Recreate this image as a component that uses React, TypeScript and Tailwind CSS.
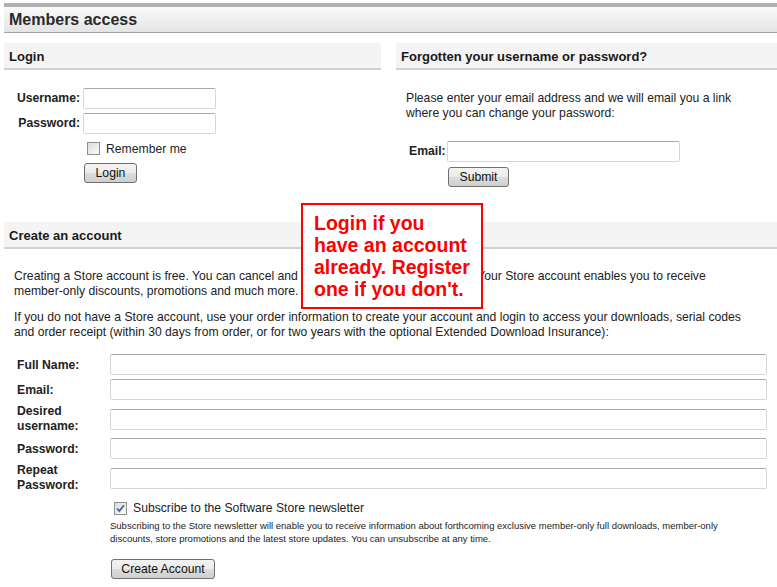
import React from "react";

const inputCls =
  "block h-[21px] bg-white border border-[#d6d6d6] border-t-[#a9a9a9] rounded-[2px] outline-none px-1 text-[12px]";

const btnCls =
  "h-[20px] px-[9px] border border-[#707070] rounded-[3px] text-[12.2px] leading-none text-[#111] bg-[linear-gradient(to_bottom,#f3f3f3_0%,#ebebeb_50%,#dddddd_51%,#cfcfcf_100%)]";

const Checkbox = ({ checked }: { checked?: boolean }) => (
  <span className="relative inline-block w-[13px] h-[13px] border border-[#8e8f8f] bg-[linear-gradient(135deg,#dcdcdc,#fbfbfb)] shrink-0">
    {checked && (
      <svg width="11" height="11" viewBox="0 0 11 11" className="absolute left-0 top-0">
        <path d="M2 5.5 L4.3 8 L9 2.2" fill="none" stroke="#4a5f97" strokeWidth="1.8" />
      </svg>
    )}
  </span>
);

const SectionHeader = ({ title }: { title: string }) => (
  <div className="h-[27px] bg-[#f4f4f4] border-b-2 border-[#d2d2d2] pl-[5px] pt-[1px] flex items-center text-[13px] font-bold text-[#1a1a1a]">
    {title}
  </div>
);

const App: React.FC = () => {
  return (
    <div
      className="relative w-[777px] h-[587px] bg-white pl-[4px] pt-[3px] text-[#222] text-[12.2px] leading-[15px]"
      style={{ fontFamily: '"Liberation Sans", Arial, sans-serif' }}
    >
      {/* Page title */}
      <div className="border-t-4 border-[#b0b0b0]">
        <div className="h-[26px] bg-gradient-to-b from-[#fafafa] to-[#e4e4e4] border-b border-[#a3a3a3] pl-[5px] flex items-center text-[16px] font-bold text-[#2a2a2a]">
          Members access
        </div>
      </div>

      <div className="mt-[10px] flex gap-[15px]">
        {/* Login */}
        <div className="w-[377px]">
          <SectionHeader title="Login" />
          <div className="mt-[17px] flex flex-col gap-[4px]">
            <div className="flex items-center pt-[1px]">
              <label className="w-[76px] text-right font-bold">Username:</label>
              <input className={`${inputCls} ml-[3px] w-[133px]`} />
            </div>
            <div className="flex items-center">
              <label className="w-[76px] text-right font-bold">Password:</label>
              <input type="password" className={`${inputCls} ml-[3px] w-[133px]`} />
            </div>
          </div>
          <div className="mt-[5px] ml-[83px] h-[18px] flex items-center">
            <Checkbox />
            <span className="ml-[6px] mt-[2px]">Remember me</span>
          </div>
          <button className={`${btnCls} mt-[6px] ml-[80px] w-[53px]`}>Login</button>
        </div>

        {/* Forgotten */}
        <div className="flex-1">
          <SectionHeader title="Forgotten your username or password?" />
          <p className="mt-[21px] pl-[10px]">
            Please enter your email address and we will email you a link
            <br />
            where you can change your password:
          </p>
          <div className="mt-[20px] pl-[13px] flex items-center">
            <label className="font-bold">Email:</label>
            <input className={`${inputCls} ml-[1px] w-[233px]`} />
          </div>
          <button className={`${btnCls} mt-[5px] ml-[52px] w-[61px]`}>Submit</button>
        </div>
      </div>

      {/* Create an account */}
      <div className="mt-[35px]">
        <SectionHeader title="Create an account" />
        <p className="mt-[20px] pl-[10px]">
          Creating a Store account is free. You can cancel and delete your account at any time. Your Store account enables you to receive
          <br />
          member-only discounts, promotions and much more.
        </p>
        <p className="mt-[11px] pl-[10px]">
          If you do not have a Store account, use your order information to create your account and login to access your downloads, serial codes
          <br />
          and order receipt (within 30 days from order, or for two years with the optional Extended Download Insurance):
        </p>

        <div className="mt-[14px] pl-[13px] pr-[10px] grid grid-cols-[93px_1fr] gap-y-[4px] items-center font-bold">
          <label className="pt-[1px]">Full Name:</label>
          <input className={`${inputCls} w-full`} />
          <label className="pt-[1px]">Email:</label>
          <input className={`${inputCls} w-full`} />
          <label>
            Desired
            <br />
            username:
          </label>
          <input className={`${inputCls} w-full`} />
          <label className="pt-[1px]">Password:</label>
          <input type="password" className={`${inputCls} w-full`} />
          <label>
            Repeat
            <br />
            Password:
          </label>
          <input type="password" className={`${inputCls} w-full`} />
        </div>

        <div className="mt-[6px] ml-[110px] h-[18px] flex items-center">
          <Checkbox checked />
          <span className="ml-[6px] mt-[1px]">Subscribe to the Software Store newsletter</span>
        </div>
        <p className="mt-[2px] ml-[106px] text-[9.5px] leading-[13px]">
          Subscribing to the Store newsletter will enable you to receive information about forthcoming exclusive member-only full downloads, member-only
          <br />
          discounts, store promotions and the latest store updates. You can unsubscribe at any time.
        </p>
        <button className={`${btnCls} mt-[14px] ml-[107px] w-[104px]`}>Create Account</button>
      </div>

      {/* Annotation */}
      <div className="absolute left-[301px] top-[203px] w-[182px] h-[106px] bg-white border-2 border-[#ff0000] pl-[11px] pt-[7px] text-[19.5px] leading-[22px] font-bold text-[#ff0000]">
        Login if you
        <br />
        have an account
        <br />
        already. Register
        <br />
        one if you don't.
      </div>
    </div>
  );
};

export default App;
